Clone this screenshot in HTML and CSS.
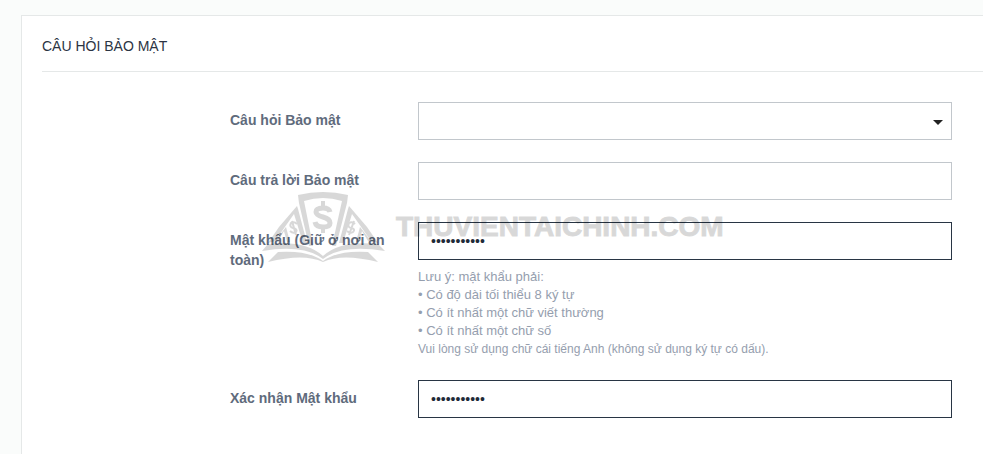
FILE: index.html
```html
<!DOCTYPE html>
<html lang="vi">
<head>
<meta charset="utf-8">
<title>Câu hỏi bảo mật</title>
<link rel="stylesheet" href="styles.css">
</head>
<body>
<main class="panel">
  <h1 class="panel-title">CÂU HỎI BẢO MẬT</h1>
  <form class="form">
    <div class="row">
      <label class="label" for="question">Câu hỏi Bảo mật</label>
      <div class="field select-field">
        <select class="control" id="question"><option value=""></option></select>
      </div>
    </div>
    <div class="row">
      <label class="label" for="answer">Câu trả lời Bảo mật</label>
      <div class="field"><input class="control" id="answer" type="text"></div>
    </div>
    <div class="row">
      <label class="label" for="password">Mật khẩu (Giữ ở nơi an toàn)</label>
      <div class="field">
        <input class="control filled" id="password" type="password" value="matkhau1234" aria-describedby="hint">
        <div class="hint" id="hint">
          Lưu ý: mật khẩu phải:<br>
          • Có độ dài tối thiểu 8 ký tự<br>
          • Có ít nhất một chữ viết thường<br>
          • Có ít nhất một chữ số
          <p class="hint-small">Vui lòng sử dụng chữ cái tiếng Anh (không sử dụng ký tự có dấu).</p>
        </div>
      </div>
    </div>
    <div class="row">
      <label class="label" for="confirm">Xác nhận Mật khẩu</label>
      <div class="field"><input class="control filled" id="confirm" type="password" value="matkhau1234"></div>
    </div>
  </form>
</main>
<div class="watermark">
  <svg class="watermark-logo" width="124" height="72" viewBox="262 191 124 72" aria-hidden="true">
    <!-- centre note -->
    <path d="M298 195Q323 189 348 195L347 203L336 246L332 246L342 201Q323 195 304 201L313 246L309 246L299 203Z"/>
    <!-- side notes -->
    <path d="M297 206L298 209L307 243L303 243L294 214L275 241L268 243L279 227Z"/>
    <path d="M349 206L348 209L339 243L343 243L352 214L371 241L378 243L367 227Z"/>
    <path d="M286 227L290 242L287 242L284 231L278 241L275 241Z"/>
    <path d="M360 227L356 242L359 242L362 231L368 241L371 241Z"/>
    <!-- open book -->
    <path d="M262 251L268 244Q306 240 323 256Q340 240 378 244L385 251Q342 244 323 259Q304 244 262 251Z"/>
    <path d="M268 262L278 252Q308 250 323 261Q338 250 368 252L378 262Q342 253 323 262Q304 253 268 262Z"/>
    <g class="dollar">
      <path class="dollar-large" d="M330 212Q329 208 323 208Q316 208 316 212Q316 215 323 217Q330 219 330 223Q330 227 323 227Q316 227 315 222"/>
      <path class="dollar-bar" d="M323 201V208M323 227V233"/>
      <path class="dollar-small" d="M297 224Q294 221 291 223Q289 227 293 228Q298 229 296 232Q293 234 290 231M292 221L296 235"/>
      <path class="dollar-small" d="M355 224Q352 221 349 223Q347 227 351 228Q356 229 353 232Q350 234 347 231M354 221L349 235"/>
    </g>
  </svg>
  <span class="watermark-text">THUVIENTAICHINH.COM</span>
</div>
</body>
</html>
```

FILE: styles.css
```css
* {
  box-sizing: border-box;
}

body {
  margin: 0;
  padding: 15px 0 0 21px;
  background: #fafcfb;
  color: #2b3443;
  font: 14px/20px "Liberation Sans", Arial, sans-serif;
}

.panel {
  min-height: calc(100vh - 15px);
  padding: 20px 0 36px 20px;
  background: #fff;
  border: 1px solid #e5e8e8;
  border-width: 1px 0 0 1px;
}

.panel-title {
  margin: 0;
  padding-bottom: 15px;
  border-bottom: 1px solid #e5e8e8;
  font-size: 14px;
  font-weight: 400;
}

.form {
  display: grid;
  gap: 22px;
  padding: 30px 31px 0 188px;
}

.row {
  display: grid;
  grid-template-columns: 160px minmax(0, 1fr);
  column-gap: 28px;
}

.label {
  padding-top: 8px;
  color: #5f6b7c;
  font-weight: 700;
}

.select-field {
  position: relative;
}

.select-field::after {
  content: "";
  position: absolute;
  top: 18px;
  right: 9px;
  border: solid transparent;
  border-width: 5px 5px 0;
  border-top-color: #222;
  pointer-events: none;
}

.control {
  display: block;
  width: 100%;
  height: 38px;
  padding: 8px 12px;
  background: #fff;
  border: 1px solid #c2c7cc;
  border-radius: 0;
  color: #1f2a38;
  font: inherit;
  appearance: none;
}

.filled {
  border-color: #283544;
}

.hint {
  padding-top: 8px;
  color: #959eae;
  font-size: 13px;
  line-height: 18px;
}

.hint-small {
  margin: 0;
  font-size: 12px;
}

.watermark {
  position: absolute;
  top: 191px;
  left: 262px;
  display: flex;
  gap: 10px;
  align-items: center;
  opacity: 0.15;
  pointer-events: none;
}

.watermark-logo {
  fill: #000;
}

.dollar {
  fill: none;
  stroke: #000;
}

.dollar-large {
  stroke-width: 5px;
}

.dollar-bar {
  stroke-width: 4px;
}

.dollar-small {
  stroke-width: 2px;
}

.watermark-text {
  color: #000;
  font-size: 28px;
  font-weight: 700;
  line-height: 32px;
  -webkit-text-stroke: 1px #000;
}
```
